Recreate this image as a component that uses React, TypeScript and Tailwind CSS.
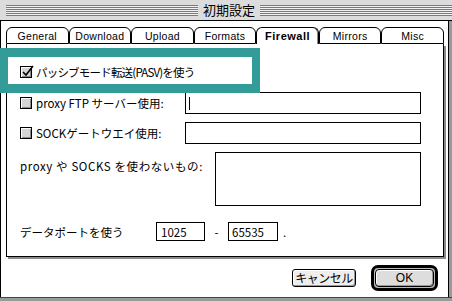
import React from "react";

const tabs = ["General", "Download", "Upload", "Formats", "Firewall", "Mirrors", "Misc"];

function Checkbox({ checked }: { checked?: boolean }) {
  return (
    <div className="relative w-[12px] h-[12px] shrink-0 border border-black bg-[#d4d4d4] shadow-[inset_1px_1px_0_#ffffff,inset_-1px_-1px_0_#8a8a8a]">
      {checked && (
        <svg className="absolute left-[-1px] top-[-3px]" width="15" height="15" viewBox="0 0 15 15">
          <path d="M3 8 L6 11 L13 2" fill="none" stroke="#000" strokeWidth="1.6" />
        </svg>
      )}
    </div>
  );
}

const stripes =
  "flex-1 h-[11px] bg-[repeating-linear-gradient(to_bottom,#7a7a7a_0px,#7a7a7a_1px,#f2f2f2_1px,#f2f2f2_2px)]";

export default function App() {
  return (
    <div className="relative w-[452px] h-[301px] overflow-hidden bg-white flex flex-col text-black font-['Noto_Sans_CJK_JP','Noto_Sans',sans-serif] text-[11.5px] leading-[14px]">
      {/* Title bar */}
      <div className="h-[21px] shrink-0 bg-[#dcdcdc] border-b border-black flex items-center pl-[6px] gap-[5px]">
        <div className={stripes} />
        <span className="text-[13px] leading-[16px]">初期設定</span>
        <div className={stripes} />
      </div>

      <div className="flex-1 flex min-h-0">
        <div className="flex-1 flex flex-col border-l border-black pl-[5px] pt-[6px]">
          {/* Tabs */}
          <div className="w-[438px] grid grid-cols-7 h-[17px] font-['Liberation_Sans',sans-serif] text-[10.5px]">
            {tabs.map((t) => {
              const sel = t === "Firewall";
              return (
                <div
                  key={t}
                  className={
                    sel
                      ? "bg-white border-t border-x border-black rounded-t-[6px] shadow-[inset_-1px_0_0_#888] flex items-center justify-center font-bold text-[11px] tracking-[0.5px]"
                      : "bg-white border-t border-x border-b border-black rounded-t-[6px] flex items-center justify-center tracking-[0.3px]"
                  }
                >
                  {t}
                </div>
              );
            })}
          </div>
          {/* Panel */}
          <div className="w-[438px] h-[213px] border-x border-b border-black shadow-[2px_2px_0_#8a8a8a] bg-white pl-[13px] pt-[17px] flex flex-col">
            <div className="h-[22px] flex items-center gap-[4px]">
              <Checkbox checked />
              <span className="tracking-[-0.8px]">パッシブモード転送(PASV)を使う</span>
            </div>
            <div className="h-[22px] mt-[9px] flex items-center">
              <div className="w-[165px] flex items-center gap-[4px]">
                <Checkbox />
                <span>proxy FTP サーバー使用:</span>
              </div>
              <div className="w-[236px] h-[22px] border border-black bg-white flex items-center pl-[3px]">
                <div className="w-[1px] h-[13px] bg-black" />
              </div>
            </div>
            <div className="h-[22px] mt-[8px] flex items-center">
              <div className="w-[165px] flex items-center gap-[4px]">
                <Checkbox />
                <span>SOCKゲートウエイ使用:</span>
              </div>
              <div className="w-[236px] h-[22px] border border-black bg-white" />
            </div>
            <div className="h-[54px] mt-[8px] flex">
              <div className="w-[195px] pt-[7px] tracking-[0.6px]">proxy や SOCKS を使わないもの:</div>
              <div className="w-[206px] h-[54px] border border-black bg-white" />
            </div>
            <div className="h-[19px] mt-[16px] flex items-center">
              <div className="w-[136px]">データポートを使う</div>
              <div className="w-[49px] h-[19px] border border-black flex items-center pl-[4px]">1025</div>
              <div className="w-[23px] text-center">-</div>
              <div className="w-[50px] h-[19px] border border-black flex items-center pl-[3px]">65535</div>
              <div className="pl-[5px]">.</div>
            </div>
          </div>
          {/* Buttons */}
          <div className="flex-1 flex items-center justify-end pr-[10px] gap-[15px] pt-[2px]">
            <div className="w-[64px] h-[18px] border border-black rounded-[3px] bg-[#eeeeee] shadow-[inset_-1px_-1px_0_#999,inset_1px_1px_0_#fff] flex items-center justify-center text-[12px] tracking-[-0.5px]">
              キャンセル
            </div>
            <div className="w-[67px] h-[26px] border-[3px] border-black rounded-[7px] bg-[#bbbbbb] p-[1px] flex">
              <div className="flex-1 border border-black rounded-[4px] bg-[#dddddd] shadow-[inset_-1px_-1px_0_#999,inset_1px_1px_0_#fff] flex items-center justify-center font-['Liberation_Sans',sans-serif] text-[12px]">
                OK
              </div>
            </div>
          </div>
        </div>
        <div className="w-[4px] shrink-0 border-l border-black bg-[#9a9a9a]" />
      </div>
      <div className="h-[4px] shrink-0 border-t border-[#444] bg-[#9a9a9a]" />

      {/* Highlight overlay */}
      <div className="absolute left-0 top-[48px] w-[260px] h-[45px] border-x-[8px] border-y-[9px] border-[#339b98]" />
    </div>
  );
}
